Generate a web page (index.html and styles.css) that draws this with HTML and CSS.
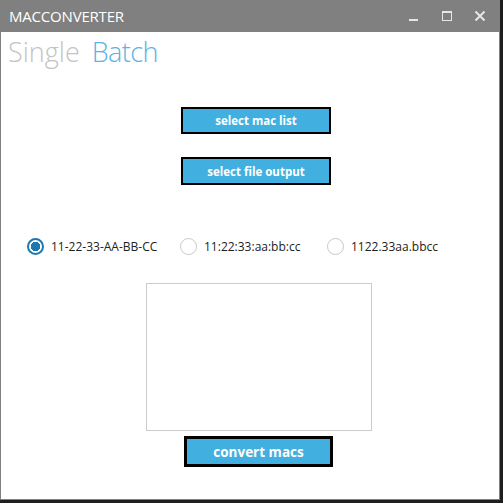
FILE: index.html
```html
<!DOCTYPE html>
<html lang="en">
<head>
  <meta charset="UTF-8">
  <title>MACCONVERTER</title>
  <link rel="stylesheet" href="styles.css">
</head>
<body>
  <div class="window">
    <div class="titlebar">
      <span class="title">MACCONVERTER</span>
      <div class="controls">
        <!-- minimise / maximise / close -->
        <svg class="ctl" width="12" height="12" viewBox="0 0 12 12"><rect x="1" y="9" width="9" height="2" fill="#e6e6e6"/></svg>
        <svg class="ctl" width="12" height="12" viewBox="0 0 12 12"><rect x="1.5" y="1.5" width="9" height="9" fill="none" stroke="#e6e6e6"/><rect x="1" y="1" width="10" height="2" fill="#e6e6e6"/></svg>
        <svg class="ctl" width="12" height="12" viewBox="0 0 12 12"><path d="M1.5 1.5 L10.5 10.5 M10.5 1.5 L1.5 10.5" stroke="#e6e6e6" stroke-width="2"/></svg>
      </div>
    </div>
    <div class="content">
      <div class="tabs">
        <span class="tab">Single</span>
        <span class="tab active">Batch</span>
      </div>

      <button class="btn btn-list">select mac list</button>
      <button class="btn btn-output">select file output</button>

      <div class="formats">
        <label class="radio"><span class="dot checked"></span>11-22-33-AA-BB-CC</label>
        <label class="radio"><span class="dot"></span>11:22:33:aa:bb:cc</label>
        <label class="radio"><span class="dot"></span>1122.33aa.bbcc</label>
      </div>

      <div class="output"></div>

      <button class="btn btn-convert">convert macs</button>
    </div>
  </div>
</body>
</html>
```

FILE: styles.css
```css
body {
  margin: 0;
  background-color: #1e1e1e;
  font-family: "Open Sans", "Noto Sans", sans-serif;
  overflow: hidden;
}
.window {
  width: 500px;
  height: 500px;
  background-color: #808080;
  display: flex;
  flex-direction: column;
}
.titlebar {
  height: 32px;
  display: flex;
  align-items: center;
  justify-content: space-between;
  flex-shrink: 0;
}
.title {
  color: #ffffff;
  font-size: 15px;
  padding-left: 9px;
  letter-spacing: -0.2px;
}
.controls {
  display: flex;
  gap: 21px;
  padding-right: 14px;
}
.content {
  flex: 1;
  background-color: #ffffff;
  margin: 0 1px 1px 1px;
  display: flex;
  flex-direction: column;
  align-items: flex-start;
}
.tabs {
  display: flex;
  gap: 12px;
  padding: 1px 0 0 7px;
  line-height: 38px;
  font-size: 27px;
  font-weight: 300;
}
.tab {
  color: #c4c4c4;
}
.tab.active {
  color: #5cb3e3;
  letter-spacing: -0.6px;
}
.btn {
  font-family: inherit;
  background-color: #41b0e0;
  border: 2px solid #000000;
  color: #ffffff;
  font-weight: bold;
  font-size: 11.5px;
  padding: 0;
  cursor: pointer;
}
.btn-list {
  margin: 36px 0 0 180px;
  width: 150px;
  height: 27px;
}
.btn-output {
  margin: 23px 0 0 180px;
  width: 150px;
  height: 28px;
}
.formats {
  display: flex;
  align-items: center;
  margin: 53px 0 0 26px;
}
.radio {
  display: flex;
  align-items: center;
  gap: 7px;
  font-size: 12px;
  color: #222222;
}
.radio:nth-child(1) {
  width: 153px;
}
.radio:nth-child(2) {
  width: 147px;
}
.dot {
  width: 15px;
  height: 15px;
  border: 1px solid #c8c8c8;
  border-radius: 50%;
  box-sizing: content-box;
}
.dot.checked {
  border: 2px solid #1d78ad;
  width: 13px;
  height: 13px;
  background: radial-gradient(circle, #1d78ad 0 4.5px, #ffffff 5px);
}
.output {
  margin: 28px 0 0 145px;
  width: 224px;
  height: 146px;
  border: 1px solid #cccccc;
}
.btn-convert {
  margin: 5px 0 0 183px;
  width: 149px;
  height: 31px;
  font-size: 13.5px;
  border-width: 3px;
}
```
